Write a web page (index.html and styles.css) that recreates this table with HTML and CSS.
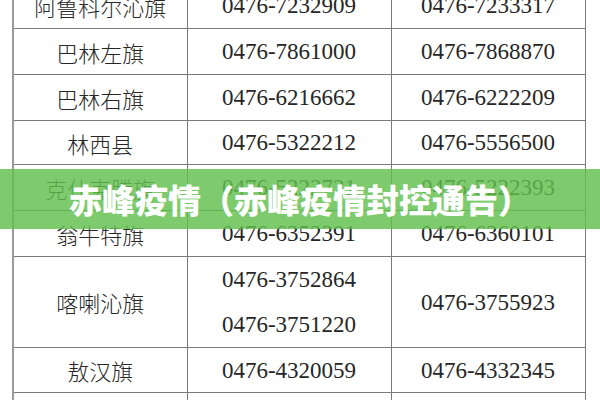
FILE: index.html
```html
<!DOCTYPE html>
<html lang="zh-CN">
<head>
<meta charset="utf-8">
<title>赤峰疫情（赤峰疫情封控通告）</title>
<link rel="stylesheet" href="styles.css">
</head>
<body>
<div class="page">
  <table class="phones">
    <colgroup>
      <col class="c1"><col class="c2"><col class="c3">
    </colgroup>
    <tbody>
      <tr><td class="name">阿鲁科尔沁旗</td><td class="tel">0476-7232909</td><td class="tel">0476-7233317</td></tr>
      <tr><td class="name">巴林左旗</td><td class="tel">0476-7861000</td><td class="tel">0476-7868870</td></tr>
      <tr><td class="name">巴林右旗</td><td class="tel">0476-6216662</td><td class="tel">0476-6222209</td></tr>
      <tr class="short"><td class="name">林西县</td><td class="tel">0476-5322212</td><td class="tel">0476-5556500</td></tr>
      <tr><td class="name">克什克腾旗</td><td class="tel">0476-5222721</td><td class="tel">0476-5222393</td></tr>
      <tr><td class="name">翁牛特旗</td><td class="tel">0476-6352391</td><td class="tel">0476-6360101</td></tr>
      <tr class="double"><td class="name">喀喇沁旗</td><td class="tel"><span class="line">0476-3752864</span><span class="line">0476-3751220</span></td><td class="tel">0476-3755923</td></tr>
      <tr class="last"><td class="name">敖汉旗</td><td class="tel">0476-4320059</td><td class="tel">0476-4332345</td></tr>
      <tr><td></td><td></td><td></td></tr>
    </tbody>
  </table>
  <div class="banner">赤峰疫情（赤峰疫情封控通告）</div>
</div>
</body>
</html>
```

FILE: styles.css
```css
html, body {
  margin: 0;
  padding: 0;
  background: #ffffff;
}

.page {
  position: relative;
  width: 600px;
  height: 400px;
  overflow: hidden;
}

.phones {
  border-collapse: collapse;
  table-layout: fixed;
  width: 572px;
  margin: -18px 0 0 12px;
  color: #262626;
  font-family: "Liberation Serif", "Noto Sans CJK SC", serif;
}

.c1 { width: 174px; }
.c2 { width: 204px; }
.c3 { width: 194px; }

.phones td {
  border: 1px solid #7a7a7a;
  height: 45px;
  padding: 0;
  text-align: center;
  vertical-align: middle;
  line-height: 1;
}

.phones td:first-child {
  border-left: 2px solid #9a9a9a;
}

.phones tr.short td { height: 43px; }
.phones tr.double td { height: 88px; }
.phones tr.last td { height: 44px; }

.name {
  font-family: "Noto Sans CJK SC", sans-serif;
  font-weight: 300;
  font-size: 22px;
}

.tel {
  font-size: 23px;
}

.line {
  display: block;
  line-height: 45px;
}

.banner {
  position: absolute;
  left: 0;
  right: 0;
  top: 169px;
  height: 60px;
  background: rgba(98, 192, 78, 0.82);
  color: #ffffff;
  font-family: "Noto Sans CJK SC", sans-serif;
  font-weight: 900;
  font-size: 33px;
  line-height: 60px;
  text-align: center;
  white-space: nowrap;
}
```
